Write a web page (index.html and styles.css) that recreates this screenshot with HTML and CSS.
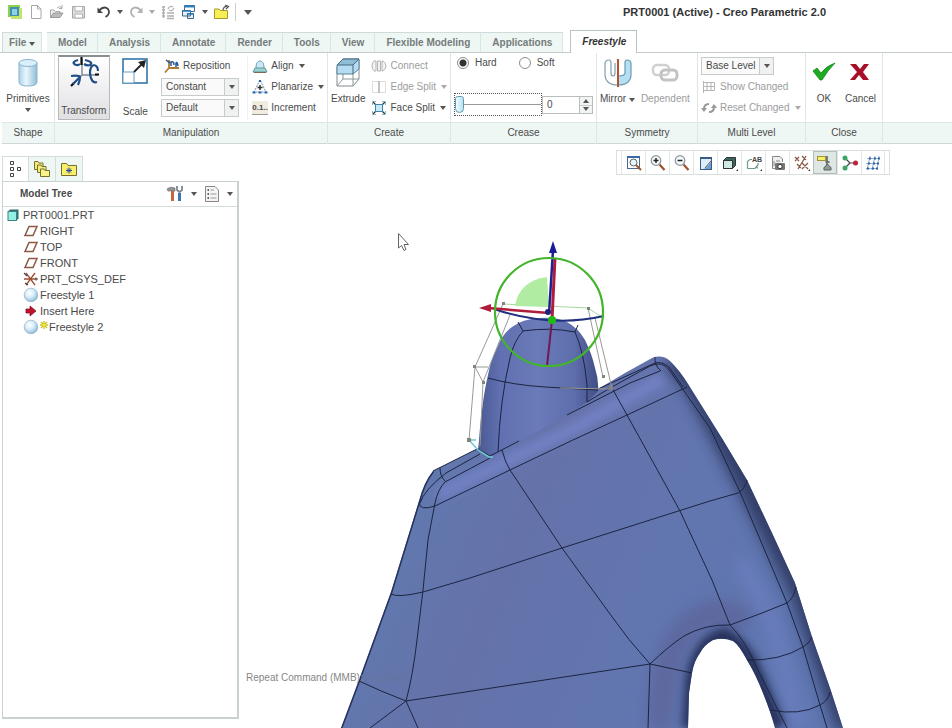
FILE: index.html
```html
<!DOCTYPE html>
<html lang="en">
  <head>
    <meta charset="UTF-8" />
    <meta name="viewport" content="width=device-width, initial-scale=1.0" />
    <title>PRT0001 (Active) - Creo Parametric 2.0</title>
    <link rel="stylesheet" href="styles.css">
  </head>
  <body>
    <!-- shared icons -->
    <svg class="defs" width="0" height="0">
      <defs>
        <linearGradient id="cyl" x1="0" x2="1" y1="0" y2="0">
          <stop offset="0" stop-color="#a9d3e8" />
          <stop offset="0.4" stop-color="#eaf7fd" />
          <stop offset="1" stop-color="#8fbdd6" />
        </linearGradient>
        <radialGradient id="orb" cx="0.4" cy="0.35" r="0.65">
          <stop offset="0" stop-color="#ffffff" />
          <stop offset="0.5" stop-color="#d6edf9" />
          <stop offset="1" stop-color="#8cb9d6" />
        </radialGradient>
        <symbol id="i-plane" viewBox="0 0 16 14">
          <path d="M6 2.500H14L10 11.500H2Z" fill="#fff" stroke="#8a5a44" stroke-width="1.500" />
        </symbol>
        <symbol id="i-sphere" viewBox="0 0 16 16">
          <circle cx="8" cy="8" r="6.800" fill="url(#orb)" stroke="#8fb2c9" stroke-width="0.700" />
        </symbol>
        <symbol id="i-lens" viewBox="0 0 18 18">
          <path d="M10.500 10.500L15.500 16" stroke="#a0522d" stroke-width="2.200" />
          <circle cx="7" cy="6.500" r="4.800" fill="#f4f9fb" stroke="#8a9499" stroke-width="1.200" />
        </symbol>
      </defs>
    </svg>

    <header class="titlebar">
      <div class="quick">
        <button class="qbtn" aria-label="Creo">
          <svg width="16" height="16" viewBox="0 0 16 16"><rect x="1" y="1" width="12" height="12" fill="#8fd04a" /><rect x="4" y="4" width="11" height="11" fill="#c5e36b" /><rect x="3" y="3" width="9" height="9" fill="#3f8fb0" /><path d="M5 5H10V11H5Z" fill="#8bd0e4" /></svg>
        </button>
        <button class="qbtn" aria-label="New">
          <svg width="16" height="16" viewBox="0 0 16 16"><path d="M3.500 1.500H9.500L13 5V14.500H3.500Z M9.500 1.500V5H13" fill="#fff" stroke="#a8a8a8" /></svg>
        </button>
        <button class="qbtn" aria-label="Open">
          <svg width="16" height="16" viewBox="0 0 16 16"><path d="M1.500 13.500V6H5L6.500 7.500H11V9" fill="#eee" stroke="#a8a8a8" /><path d="M1.500 13.500L4.500 9H14L11 13.500Z" fill="#bbb" stroke="#999" /><path d="M8 4Q11 1 13 4M13 1V4.500H10" fill="none" stroke="#aaa" /></svg>
        </button>
        <button class="qbtn save" aria-label="Save">
          <svg width="16" height="16" viewBox="0 0 16 16"><path d="M2.500 2.500H14.500V14H2.500Z" fill="#dcdcdc" stroke="#a5a5a5" /><path d="M5 2.500H12.500V7H5ZM5 10H12.500V14H5Z" fill="#fff" stroke="#b4b4b4" /></svg>
        </button>
        <button class="qbtn" aria-label="Undo">
          <svg width="16" height="16" viewBox="0 0 16 16"><path d="M3 6.500Q8 1.500 12 5Q15 9.500 9.500 13" fill="none" stroke="#444" stroke-width="1.800" /><path d="M1.500 3.500V9H7Z" fill="#444" /></svg>
        </button>
        <span class="caret"></span>
        <button class="qbtn" aria-label="Redo">
          <svg width="16" height="16" viewBox="0 0 16 16"><path d="M13 6.500Q8 1.500 4 5Q1 9.500 6.500 13" fill="none" stroke="#b2b2b2" stroke-width="1.800" /><path d="M14.500 3.500V9H9Z" fill="#b2b2b2" /></svg>
        </button>
        <span class="caret off"></span>
        <button class="qbtn" aria-label="Regenerate">
          <svg width="16" height="16" viewBox="0 0 16 16"><path d="M2 3H5M2 6H5M2 9H5M2 12H5M7 9H14M7 12H14M7 14.500H14M3.500 2V14M8 5Q10 1 13 3M14 4Q12 8 9 6" fill="none" stroke="#b0b0b0" stroke-width="1.300" /></svg>
        </button>
        <button class="qbtn" aria-label="Windows">
          <svg width="16" height="16" viewBox="0 0 16 16"><path d="M3.500 1.500H13.500V7.500H3.500Z" fill="#fff" stroke="#3e6c96" /><path d="M3 2.500H14" stroke="#2d7fb8" stroke-width="2" /><path d="M1.500 6.500H9.500V12H1.500ZM6.500 9.500H12.500V14.500H6.500Z" fill="#e6f2fa" stroke="#41637f" /><path d="M1 7H10M6 10H13" stroke="#2d7fb8" stroke-width="1.600" /></svg>
        </button>
        <span class="caret"></span>
        <button class="qbtn" aria-label="Close window">
          <svg width="17" height="16" viewBox="0 0 17 16"><path d="M1.500 14.500V5H6L7.500 6.500H14.500V14.500Z" fill="#f6ee55" stroke="#a89a28" /><path d="M10 6Q11 2 14 2.500M12 1L15.500 2.500L13 5" fill="none" stroke="#555" stroke-width="1.200" /></svg>
        </button>
        <span class="qsep"></span>
        <button class="qbtn more" aria-label="Customize"><span class="caret wide"></span></button>
      </div>
      <h1 class="title">PRT0001 (Active) - Creo Parametric 2.0</h1>
    </header>

    <nav class="tabs">
      <button class="tab file">File <span class="caret"></span></button>
      <button class="tab">Model</button>
      <button class="tab">Analysis</button>
      <button class="tab">Annotate</button>
      <button class="tab">Render</button>
      <button class="tab">Tools</button>
      <button class="tab">View</button>
      <button class="tab">Flexible Modeling</button>
      <button class="tab">Applications</button>
      <button class="tab active">Freestyle</button>
    </nav>

    <div class="ribbon">
      <section class="group">
        <div class="group-body">
          <button class="big">
            <svg width="24" height="32" viewBox="0 0 24 32"><path d="M3 6V25Q3 29 12 29Q21 29 21 25V6Z" fill="url(#cyl)" stroke="#86b4cd" /><ellipse cx="12" cy="6" rx="9" ry="3.500" fill="#d9f0fa" stroke="#86b4cd" /></svg>
            <span>Primitives</span>
            <span class="caret"></span>
          </button>
        </div>
        <h2>Shape</h2>
      </section>

      <section class="group">
        <div class="group-body manip">
          <button class="big pressed">
            <svg width="32" height="32" viewBox="0 0 32 32"><path d="M14 2V18M14 18L30 18M14 18L4 28" stroke="#7c8894" stroke-width="1.400" fill="none" /><path d="M13.500 0V8M27 17.500H31M3 29L6 26" stroke="#111" stroke-width="2.200" /><path d="M10 3Q3 5 7 7.500Q10 9 12 7M17 3Q26 5 22 8Q19 9 16 7M26 8Q22 9 22 16Q23 27 29 25M26 8Q30 9 30 14M3 19Q11 18 12 20Q12 24 10 28M12 20L5 27" fill="none" stroke="#1f4e86" stroke-width="2.200" /></svg>
            <span>Transform</span>
          </button>
          <button class="big low">
            <svg width="28" height="28" viewBox="0 0 28 28"><rect x="2" y="2" width="24" height="24" fill="#fff" stroke="#3275a8" stroke-width="1.600" /><rect x="2" y="15" width="11" height="11" fill="#fff" stroke="#6c9ec0" /><path d="M13 15L22 6" stroke="#222" stroke-width="1.800" /><path d="M25 3L23 11L17 5Z" fill="#222" /></svg>
            <span>Scale</span>
          </button>
          <div class="rows repos">
            <button class="small">
              <svg width="16" height="16" viewBox="0 0 16 16"><path d="M5 2V10H15M5 10L1 14.500" stroke="#b07a2e" stroke-width="1.800" fill="none" /><path d="M2 2L6 5M7 8V4Q10 3 10 7M12 9V5Q13 3 14 8" stroke="#24569a" stroke-width="1.500" fill="none" /></svg>
              Reposition
            </button>
            <div class="select wide">
              <select aria-label="Drag mode"><option>Constant</option></select>
              <span class="drop"><span class="caret"></span></span>
            </div>
            <div class="select wide">
              <select aria-label="Orientation"><option>Default</option></select>
              <span class="drop"><span class="caret"></span></span>
            </div>
          </div>
          <div class="rows align">
            <button class="small">
              <svg width="16" height="16" viewBox="0 0 16 16"><path d="M4 10Q4 3 8 3Q12 3 12 10" fill="#cfe7f2" stroke="#6aa5bf" /><path d="M1 14L3 10H13L15 14Z" fill="#9fd0cc" stroke="#5b9aa0" /><path d="M2 14.500H14" stroke="#7a6a50" /></svg>
              Align <span class="caret"></span>
            </button>
            <button class="small">
              <svg width="16" height="16" viewBox="0 0 16 16"><path d="M8 1L2 13H14Z" fill="none" stroke="#6e8fab" stroke-dasharray="2 1" /><path d="M0.500 13.500H3.500M6.500 13.500H9.500M12.500 13.500H15.500M8 1V3" stroke="#2467ad" stroke-width="2.200" /><path d="M8 6V11M5.500 8.500H10.500" stroke="#333" stroke-width="1.500" /></svg>
              Planarize <span class="caret"></span>
            </button>
            <button class="small">
              <span class="inc-icon">0.1..</span>
              Increment
            </button>
          </div>
        </div>
        <h2>Manipulation</h2>
      </section>

      <section class="group">
        <div class="group-body create">
          <button class="big">
            <svg width="28" height="32" viewBox="0 0 28 32"><path d="M3 10V29H19L25 22V3" fill="#fff" stroke="#7e8a90" /><path d="M19 29V14M3 29L9 22H25M9 22V14" fill="none" stroke="#8d979c" /><path d="M3 8L9 2H25V12L19 17H3Z" fill="#b5dcf0" stroke="#5b8298" /><path d="M3 8L9 2H25L19 8Z" fill="#8fbdd6" stroke="#45697e" /><path d="M19 8V17" fill="none" stroke="#45697e" /></svg>
            <span>Extrude</span>
          </button>
          <div class="rows">
            <button class="small" disabled>
              <svg width="16" height="16" viewBox="0 0 16 16"><path d="M5 3H3Q1 5 1 8T3 13H5ZM11 3H12Q15 5 15 8T12 13H11ZM6.500 3H9.500V13H6.500Z" fill="#f2f2f2" stroke="#b5b5b5" /></svg>
              Connect
            </button>
            <button class="small" disabled>
              <svg width="16" height="16" viewBox="0 0 16 16"><path d="M1.500 2.500H14.500V13.500H1.500Z" fill="none" stroke="#ddd" /><path d="M8 2V14" stroke="#aaa" stroke-width="1.400" /></svg>
              Edge Split <span class="caret off"></span>
            </button>
            <button class="small">
              <svg width="16" height="16" viewBox="0 0 16 16"><path d="M2 2L5 5M14 2L11 5M2 14L5 11M14 14L11 11" stroke="#333" stroke-width="1.300" /><rect x="4.500" y="4.500" width="7" height="7" fill="#c9e8f4" stroke="#3b86ac" /><path d="M1.500 5V1.500H5M11 1.500H14.500V5M14.500 11V14.500H11M5 14.500H1.500V11" fill="none" stroke="#8bb6c9" /></svg>
              Face Split <span class="caret"></span>
            </button>
          </div>
        </div>
        <h2>Create</h2>
      </section>

      <section class="group">
        <div class="group-body crease">
          <div class="radios">
            <label><input type="radio" name="crease" checked /> Hard</label>
            <label><input type="radio" name="crease" /> Soft</label>
          </div>
          <div class="crease-value">
            <div class="slider"><input type="range" min="0" max="100" value="0" aria-label="Crease" /></div>
            <div class="spin">
              <input type="text" value="0" aria-label="Crease value" />
              <div class="spin-btns">
                <button aria-label="Increase"><span class="caret up"></span></button>
                <button aria-label="Decrease"><span class="caret"></span></button>
              </div>
            </div>
          </div>
        </div>
        <h2>Crease</h2>
      </section>

      <section class="group">
        <div class="group-body pair">
          <button class="big">
            <svg width="30" height="32" viewBox="0 0 30 32"><path d="M16 28Q3 28 3 17V7Q3 3 7 3Q9 3 9 6V16Q9 19 11 19Q13 19 13 16V6" fill="#fff" stroke="#7e9eb0" stroke-width="1.200" /><path d="M16 28Q29 28 29 17V7Q29 3 25 3Q23 3 23 6V16Q23 19 16 19Z" fill="#b5dff2" stroke="#6a9ab2" stroke-width="1.200" /><path d="M16 2V30" stroke="#b4532f" stroke-width="2" /></svg>
            <span>Mirror <span class="caret"></span></span>
          </button>
          <button class="big" disabled>
            <svg width="30" height="32" viewBox="0 0 30 32"><rect x="3" y="8" width="16" height="10" rx="4" fill="none" stroke="#d0d0d0" stroke-width="2.500" /><rect x="11" y="13" width="16" height="10" rx="4" fill="none" stroke="#c3c3c3" stroke-width="3" /></svg>
            <span>Dependent</span>
          </button>
        </div>
        <h2>Symmetry</h2>
      </section>

      <section class="group">
        <div class="group-body">
          <div class="rows">
            <div class="select level">
              <select aria-label="Level"><option>Base Level</option></select>
              <span class="drop"><span class="caret"></span></span>
            </div>
            <button class="small" disabled>
              <svg width="16" height="16" viewBox="0 0 16 16"><path d="M2.500 2V14M2.500 3.500H13.500V11.500H2.500M6 3.500V11.500M10 3.500V11.500M2.500 7.500H13.500" fill="none" stroke="#b5b5b5" /></svg>
              Show Changed
            </button>
            <button class="small" disabled>
              <svg width="16" height="16" viewBox="0 0 16 16"><path d="M3 9Q3 4 8 4M13 7Q13 12 8 12" fill="none" stroke="#999" stroke-width="2" /><path d="M0 8H6L3 12ZM10 8H16L13 4Z" fill="#999" /></svg>
              Reset Changed <span class="caret off"></span>
            </button>
          </div>
        </div>
        <h2>Multi Level</h2>
      </section>

      <section class="group">
        <div class="group-body pair close">
          <button class="big">
            <svg width="24" height="32" viewBox="0 0 24 32"><path d="M1 14L5 11L9 16Q14 9 23 6Q16 13 10 23H8Z" fill="#1faa24" stroke="#178a1b" stroke-width="0.800" /></svg>
            <span>OK</span>
          </button>
          <button class="big">
            <svg width="24" height="32" viewBox="0 0 24 32"><path d="M2 7H8L12 12L16 7H21L15 15L21 23H15L11 18L7 23H2L9 15Z" fill="#a8102a" /></svg>
            <span>Cancel</span>
          </button>
        </div>
        <h2>Close</h2>
      </section>

      <section class="group filler">
        <div class="group-body"></div>
        <h2></h2>
      </section>
    </div>

    <main class="work">
      <aside class="side">
        <div class="side-tabs">
          <button class="side-tab active" aria-label="Model tree">
            <svg width="16" height="18" viewBox="0 0 16 18"><path d="M2.500 1.500H5.500V4.500H2.500ZM2.500 7.500H5.500V10.500H2.500ZM2.500 13.500H5.500V16.500H2.500ZM9.500 7.500H12.500V10.500H9.500Z" fill="#fff" stroke="#444" /></svg>
          </button>
          <button class="side-tab" aria-label="Folders">
            <svg width="18" height="18" viewBox="0 0 18 18"><path d="M1.500 9.500V1.500H5L6 3H10V9.500Z" fill="#f5ec7a" stroke="#77702c" /><path d="M4.500 12.500V5H8L9 6.500H13V12.500Z" fill="#f5ec7a" stroke="#77702c" /><path d="M7.500 16.500V9H11L12 10.500H16.500V16.500Z" fill="#faf28a" stroke="#77702c" /></svg>
          </button>
          <button class="side-tab" aria-label="Favorites">
            <svg width="18" height="16" viewBox="0 0 18 16"><path d="M1.500 14.500V2.500H6.500L8 4.500H16.500V14.500Z" fill="#f9ef6a" stroke="#77702c" /><path d="M9 6.500V12.500M6 9.500H12M7 7.500L11 11.500M11 7.500L7 11.500" stroke="#2b4b9b" /></svg>
          </button>
        </div>
        <div class="panel">
          <div class="panel-head">
            <h2>Model Tree</h2>
            <button class="qbtn" aria-label="Settings">
              <svg width="18" height="18" viewBox="0 0 18 18"><path d="M1 4Q4 1 9 3V6H2Z" fill="#8f9699" stroke="#666" stroke-width="0.600" /><path d="M6.500 6V16" stroke="#c5683b" stroke-width="3" /><path d="M13.500 8V16" stroke="#3a76b4" stroke-width="3" /><path d="M11 1V5L13.500 7L16 5V1" fill="none" stroke="#7d878c" stroke-width="1.800" /></svg>
            </button>
            <span class="caret"></span>
            <button class="qbtn list" aria-label="Show">
              <svg width="16" height="18" viewBox="0 0 16 18"><path d="M1.500 1.500H11L14.500 5V16.500H1.500Z" fill="#f4f4f4" stroke="#888" /><path d="M3.500 5H5M3.500 9H5M3.500 13H5" stroke="#333" stroke-width="1.500" /><path d="M6.500 5H10M6.500 9H12.500M6.500 13H12.500" stroke="#999" /></svg>
            </button>
            <span class="caret"></span>
          </div>
          <ul class="tree">
            <li class="root"><svg width="16" height="14" viewBox="0 0 16 14"><path d="M2 3.500L4 1.500H12.500V10.500L10.500 12.500H2Z" fill="#2f6e6c" /><rect x="2" y="3.500" width="8.500" height="9" fill="#93f0e2" stroke="#3c8583" /></svg>PRT0001.PRT</li>
            <li><svg width="16" height="14"><use href="#i-plane" /></svg>RIGHT</li>
            <li><svg width="16" height="14"><use href="#i-plane" /></svg>TOP</li>
            <li><svg width="16" height="14"><use href="#i-plane" /></svg>FRONT</li>
            <li><svg width="16" height="16" viewBox="0 0 16 16"><path d="M3 2L12 14M12 2L3 14M1 8H12" stroke="#9c4f35" stroke-width="1.300" /><path d="M1 2L4 5M12 8H15M13 6.500V9.500M2 12L5 14" stroke="#444" stroke-width="1.200" /></svg>PRT_CSYS_DEF</li>
            <li><svg width="16" height="16"><use href="#i-sphere" /></svg>Freestyle 1</li>
            <li><svg width="16" height="14" viewBox="0 0 16 14"><path d="M3 5H7V2L13 7L7 12V9H3Z" fill="#c3122b" stroke="#6f0f1c" stroke-width="0.700" /></svg>Insert Here</li>
            <li><svg width="16" height="16"><use href="#i-sphere" /></svg><svg width="8" height="12" viewBox="0 0 8 12"><path d="M4 0V8M0 4H8M1 1L7 7M7 1L1 7" stroke="#c9c32a" stroke-width="1.300" /><circle cx="4" cy="4" r="1.500" fill="#f5ef3a" /></svg>Freestyle 2</li>
          </ul>
        </div>
      </aside>

      <section class="viewport">
        <svg class="scene" viewBox="240 144 712 584" preserveAspectRatio="xMinYMin slice">
          <defs>
            <linearGradient id="bodyFill" x1="0" y1="0" x2="1" y2="0.300">
              <stop offset="0" stop-color="#6775b4" />
              <stop offset="0.220" stop-color="#6079ae" />
              <stop offset="0.450" stop-color="#6572aa" />
              <stop offset="0.700" stop-color="#6275ae" />
              <stop offset="1" stop-color="#5f76b0" />
            </linearGradient>
            <linearGradient id="bumpFill" x1="0" x2="1" y1="0" y2="0">
              <stop offset="0" stop-color="#4a5993" />
              <stop offset="0.180" stop-color="#6070b0" />
              <stop offset="0.500" stop-color="#6b7ab8" />
              <stop offset="0.800" stop-color="#5e6dac" />
              <stop offset="1" stop-color="#414f86" />
            </linearGradient>
            <path id="bodyShape" d="M341 728L359 680L391 592L419 501Q424 482 433 471L477 449L598 389L625 373L652 358Q662 354 670 361Q680 371 688 384L723 440L747 480L772 533L795 583L812 637L830 688L843 728H775Q771 713 763 693Q756 675 747 660Q739 645 733 641Q723 637 713 640Q704 645 700 653Q694 661 692 673L689 693L688 728Z" />
            <clipPath id="bodyClip"><use href="#bodyShape" /></clipPath>
            <filter id="soft" x="-30%" y="-30%" width="160%" height="160%"><feGaussianBlur stdDeviation="7" /></filter>
            <filter id="softer" x="-30%" y="-30%" width="160%" height="160%"><feGaussianBlur stdDeviation="4" /></filter>
          </defs>

          <!-- body -->
          <use href="#bodyShape" fill="url(#bodyFill)" />
          <g clip-path="url(#bodyClip)" fill="none">
            <path d="M438 495L573 429L664 378" stroke="#7281c4" stroke-width="12" filter="url(#softer)" />
            <path d="M676 356L698 385L748 480L803 590L850 728" stroke="#303c68" stroke-width="28" filter="url(#soft)" />
            <path d="M740 560L772 622L800 728" stroke="#6b7dbe" stroke-width="14" filter="url(#soft)" />
            <path d="M660 728Q660 655 690 625Q720 600 745 625" stroke="#5d689f" stroke-width="26" filter="url(#soft)" />
            <path d="M690 728L693 680Q700 642 724 636Q738 642 750 662L778 728" stroke="#28335c" stroke-width="16" filter="url(#softer)" />
            <path d="M341 728L359 680L391 592L419 501Q424 482 433 471" stroke="#28325c" stroke-width="3" />
          </g>

          <!-- bump -->
          <path d="M478 450L479 440Q482 400 488 375Q491 359 497 348Q502 334 512 327Q522 319 540 318Q556 317 567 322Q578 328 585 340Q592 354 595 368Q599 380 598 391L587 402L567 415L520 441L491 456Z" fill="url(#bumpFill)" />

          <g fill="none" stroke="#1c2442" stroke-width="1">
            <path d="M440 468Q440 476 445 481M420 503Q424 490 446 473L480 454M406 701Q413 675 417 640L423 590L428 540L435 503Q438 489 445 482L490 458" />
            <path d="M419 503Q420 511 435 506L510 470L573 440L627 415L687 387" />
            <path d="M478 449L490 456L519 441M567 415L630 383L660 371" />
            <path d="M587 402L610 388L650 366Q663 360 670 371L710 428L740 492L787 603L803 647L820 705L827 728" />
            <path d="M598 389L655 363Q662 361 669 367L683 387" />
            <path d="M655 357Q654 365 661 371M433 471L477 449" />
            <path d="M502 450Q505 462 510 470L562 548L610 614Q628 640 650 664M612 388L627 415L680 511L712 580L730 625" />
            <path d="M391 594Q398 598 423 592L470 578L562 548L650 520L710 501L738 493Q745 489 747 480" />
            <path d="M359 681Q380 691 406 701L650 664M406 701L370 728M406 701L418 728M650 664L648 728M650 664L692 673" />
            <path d="M650 664Q670 645 684 636Q705 624 730 625L762 613L787 603Q794 598 796 587M730 625Q745 640 757 668L787 728M747 660Q780 661 803 647Q810 643 812 637M770 710Q800 716 820 705Q828 701 830 692" />
            <path d="M498 452Q500 400 510 358Q514 341 523 331Q550 327 575 332Q584 352 587 385L587 402M518 322L523 331M578 325L575 332M488 378Q513 385 545 387L598 390" />
          </g>

          <!-- control mesh -->
          <g fill="none" stroke="#9a9a94" stroke-width="1">
            <path d="M503 304L475 367L469 440M475 367L483 382L480 446M510 315L483 382M475 367H488M588 308L603 377M595 318L612 388M560 388L612 389" />
            <path d="M503 304L588 308M588 308L603 318" stroke="#a5d79b" />
            <path d="M469 440L478 450L489 457H493M469 440H476" stroke="#6fc6cf" stroke-width="1.500" />
          </g>
          <g fill="#84847e">
            <rect x="502" y="302" width="3" height="3" /><rect x="587" y="307" width="3" height="3" />
            <rect x="473" y="365" width="3" height="3" /><rect x="482" y="381" width="3" height="3" />
            <rect x="602" y="375" width="3" height="3" /><rect x="609" y="386" width="4" height="4" />
            <rect x="467" y="438" width="4" height="4" />
          </g>

          <!-- transform dragger -->
          <path d="M515 306Q519 281 547 277L549 307Z" fill="#b0eda3" />
          <path d="M494 309Q550 328 604 316" fill="none" stroke="#20307e" stroke-width="2" />
          <path d="M555 258L552 320" stroke="#b01c3c" stroke-width="3" />
          <path d="M553 250L549 314" stroke="#1c2391" stroke-width="2.500" />
          <path d="M553 241L549 253H557Z" fill="#1c1c96" />
          <path d="M549 313L488 308" stroke="#b01c3c" stroke-width="2.500" />
          <path d="M479 308L491 304V312Z" fill="#b01c3c" />
          <path d="M552 320L547 366" stroke="#701850" stroke-width="2" />
          <circle cx="549" cy="312" r="54" fill="none" stroke="#42b52a" stroke-width="2.200" />
          <circle cx="548" cy="312" r="3" fill="#16267c" />
          <circle cx="552" cy="320" r="4" fill="#22b914" />

          <path d="M398.500 233.500V248L401.500 245.500L404 250.500L406 249.500L404 244.500H408.500Z" fill="#fff" stroke="#666" />
        </svg>

        <div class="view-tools">
          <button aria-label="Refit"><svg width="18" height="18" viewBox="0 0 18 18"><rect x="2.500" y="2.500" width="12" height="12" fill="#fff" stroke="#4c6891" /><path d="M2 3H15" stroke="#3a68a8" stroke-width="2" /><path d="M11 11L16 16" stroke="#a0522d" stroke-width="2" /><circle cx="8.500" cy="8.500" r="3.500" fill="#e9f4f8" stroke="#59666e" /></svg></button>
          <button aria-label="Zoom in"><svg width="18" height="18" viewBox="0 0 18 18"><use href="#i-lens" width="18" height="18" /><path d="M7 4V9M4.500 6.500H9.500" stroke="#222" stroke-width="1.500" /></svg></button>
          <button aria-label="Zoom out"><svg width="18" height="18" viewBox="0 0 18 18"><use href="#i-lens" width="18" height="18" /><path d="M4.500 6.500H9.500" stroke="#222" stroke-width="1.500" /></svg></button>
          <button aria-label="Repaint"><svg width="18" height="18" viewBox="0 0 18 18"><rect x="3.500" y="3.500" width="11" height="12" fill="#dceefa" stroke="#3a5987" /><path d="M3 4H15" stroke="#3a5987" stroke-width="2" /><path d="M14 8L9 14L6 15H14Z" fill="#6d9fd0" /><path d="M14 7L8 14" stroke="#555" /></svg></button>
          <button aria-label="Display style"><svg width="18" height="18" viewBox="0 0 18 18"><path d="M2.500 6.500L5.500 3.500H14.500V11.500L11.500 14.500H2.500Z" fill="#3b6660" stroke="#333" /><path d="M2.500 6.500H11.500V14.500H2.500Z" fill="#cfe9e2" stroke="#333" /><path d="M17 15V17H15Z" fill="#333" /></svg></button>
          <button aria-label="Saved orientations"><svg width="18" height="18" viewBox="0 0 18 18"><path d="M2.500 14.500V7.500L5 5.500H7M2.500 14.500H10L13 11V9M11 12L13 14.500" fill="none" stroke="#6d9c86" stroke-width="1.200" /><text x="7" y="8" font-size="7" class="ab">AB</text><path d="M17 15V17H15Z" fill="#333" /></svg></button>
          <button aria-label="View manager"><svg width="18" height="18" viewBox="0 0 18 18"><path d="M3.500 14.500V2.500H11L13.500 5V8M3.500 14.500H6" fill="#eee" stroke="#888" /><rect x="6" y="9" width="10" height="7" rx="1" fill="#777" /><circle cx="11" cy="12.500" r="2.200" fill="#fff" stroke="#333" /><path d="M5 12V7M7 7H11" stroke="#888" /></svg></button>
          <button aria-label="Datum display"><svg width="18" height="18" viewBox="0 0 18 18"><path d="M2 3L6 7M6 3L2 7M9 2L13 6M13 2L5 15M9 9L15 15M15 9L9 15M4 10L8 14" stroke="#8c5a44" stroke-width="1.300" /><path d="M17 15V17H15Z" fill="#333" /></svg></button>
          <button class="on" aria-label="Annotation display"><svg width="18" height="18" viewBox="0 0 18 18"><rect x="1.500" y="2.500" width="8" height="4" fill="#f7ee6a" stroke="#a09433" /><path d="M11 2V8M9.500 8H13.500" stroke="#555" stroke-width="1.500" /><path d="M8 16Q7 13 10 12L11 9L13 12Q16 13 15 16Z" fill="#8f9a97" stroke="#5a625f" /></svg></button>
          <button aria-label="Spin center"><svg width="18" height="18" viewBox="0 0 18 18"><path d="M4 4L9 9L4 14M9 9H14" fill="none" stroke="#444" stroke-width="1.200" /><circle cx="4" cy="4" r="2.500" fill="#3aa564" /><circle cx="4" cy="14" r="2.500" fill="#3aa564" /><circle cx="14.500" cy="9" r="2.500" fill="#c22038" /></svg></button>
          <button aria-label="Control mesh"><svg width="18" height="18" viewBox="0 0 18 18"><path d="M6 2L3 16M11 2L8 16M15 2L13 16M3 4.500H16M2 9.500H15M2 14.500H14" fill="none" stroke="#8db0d6" /><path d="M5 4.500H7M10 4.500H12M14 4.500H16M4 9.500H6M9 9.500H11M13 9.500H15M3 14.500H5M8 14.500H10M12 14.500H14" stroke="#2f62a3" stroke-width="2" /></svg></button>
        </div>

        <p class="prompt">Repeat Command (MMB): <span>Freestyle</span></p>
      </section>
    </main>
  </body>
</html>
```

FILE: styles.css
```css
* {
  box-sizing: border-box;
}

body {
  font-family: "Liberation Sans", Arial, sans-serif;
  font-size: 10px;
  line-height: 12px;
  color: #4a4a4a;
  margin: 0;
  min-height: 100vh;
  background-color: #fff;
  display: flex;
  flex-direction: column;
}

button,
input,
select {
  font: inherit;
  color: inherit;
}

button {
  background: none;
  border: none;
  padding: 0;
  cursor: pointer;
}

button:disabled {
  color: #9c9c9c;
  cursor: default;
}

h1,
h2,
p,
ul {
  margin: 0;
  padding: 0;
}

svg {
  display: block;
  flex: none;
}

.defs {
  position: absolute;
}

.caret {
  display: inline-block;
  flex: none;
  width: 0;
  height: 0;
  border: 3px solid transparent;
  border-top: 4px solid #555;
  border-bottom: none;
}

.caret.off {
  border-top-color: #aaa;
}

.caret.up {
  border-top: none;
  border-bottom: 4px solid #555;
}

.caret.wide {
  border-width: 5px 4px 0;
}

/* title bar */
.titlebar {
  display: flex;
  align-items: center;
  justify-content: space-between;
  height: 30px;
  padding: 0 126px 6px 7px;
}

.quick {
  display: flex;
  align-items: center;
  gap: 5px;
}

.qbtn.save {
  margin-right: 5px;
}

.qsep {
  width: 1px;
  height: 18px;
  background-color: #ccc;
}

.qbtn.more {
  display: flex;
  margin-left: 3px;
}

.title {
  font-size: 11px;
  font-weight: bold;
  color: #333;
  white-space: nowrap;
}

/* ribbon tabs */
.tabs {
  display: flex;
  align-items: flex-end;
  height: 23px;
  padding-left: 2px;
  border-bottom: 1px solid #c4cccb;
}

.tab {
  height: 20px;
  padding: 0 10px 0 11px;
  font-weight: bold;
  color: #757b7b;
  background-color: #eef7f4;
  border-top: 1px solid #cfdbd8;
  border-right: 1px solid #dbe6e3;
  white-space: nowrap;
}

.tab.file {
  padding: 0 6px;
  margin-right: 5px;
  border-left: 1px solid #cfdbd8;
}

.tab.active {
  height: 23px;
  margin: 0 0 -1px 7px;
  font-style: italic;
  color: #333;
  background-color: #fff;
  border: 1px solid #b9c3c1;
  border-bottom: none;
}

/* ribbon */
.ribbon {
  display: grid;
  grid-template-columns: 53px 273px 123px 146px 101px 108px 77px 1fr;
  padding-left: 2px;
}

.group {
  display: flex;
  flex-direction: column;
  border-right: 1px solid #dde6e4;
}

.group.filler {
  border-right: none;
}

.group h2 {
  height: 22px;
  font-size: 10px;
  font-weight: normal;
  line-height: 20px;
  text-align: center;
  background-color: #eef7f4;
  border-top: 1px solid #dde8e5;
  border-bottom: 1px solid #cdd8d6;
}

.group-body {
  display: flex;
  height: 69px;
  padding: 2px 3px;
}

.big {
  display: flex;
  flex-direction: column;
  align-items: center;
  gap: 4px;
  height: 65px;
  padding-top: 2px;
  white-space: nowrap;
}

.group:first-child .big {
  width: 100%;
}

.group:first-child .big .caret {
  margin-top: -1px;
}

.big.pressed,
.big.low {
  width: 52px;
  justify-content: space-between;
  padding-bottom: 2px;
}

.big.pressed {
  background: linear-gradient(#fff, #e0e0e4);
  border: 1px solid #b5b9ba;
  border-top: 2px solid #8a9090;
  padding: 0 0 2px;
}

.rows {
  display: grid;
  grid-template-rows: repeat(3, 21px);
  align-items: center;
  justify-items: start;
}

.small {
  display: flex;
  align-items: center;
  gap: 3px;
  white-space: nowrap;
}

.small .caret {
  margin-left: 2px;
}

.repos {
  width: 79px;
  margin-right: 8px;
}

.repos .small {
  margin-left: 3px;
}

.align {
  padding-left: 4px;
  border-left: 1px solid #eef1f1;
}

.inc-icon {
  width: 16px;
  font-size: 8px;
  font-weight: bold;
  line-height: 13px;
  text-align: left;
  background-color: #f1ecdf;
  border-bottom: 1px solid #999;
}

.select {
  display: grid;
  grid-template-columns: 1fr 14px;
  height: 18px;
  background-color: #fafafa;
  border: 1px solid #c5cccb;
}

.select.wide {
  width: 78px;
}

.select.level {
  width: 73px;
}

.select select {
  grid-area: 1 / 1 / 2 / 3;
  appearance: none;
  padding: 0 4px;
  border: none;
  background: none;
}

.drop {
  grid-area: 1 / 2;
  display: grid;
  place-items: center;
  border-left: 1px solid #c5cccb;
  background-color: #f0f2f2;
  pointer-events: none;
}

.create {
  gap: 6px;
}

.crease {
  flex-direction: column;
  justify-content: space-between;
  padding-bottom: 6px;
}

.radios {
  display: flex;
  gap: 22px;
  padding-left: 3px;
}

.radios label {
  display: flex;
  align-items: center;
  gap: 6px;
  height: 16px;
}

.radios input {
  appearance: none;
  width: 12px;
  height: 12px;
  margin: 0;
  border: 1px solid #8b8b8b;
  border-radius: 50%;
  background-color: #fff;
}

.radios input:checked {
  background: radial-gradient(#333 0 3px, #fff 4px);
}

.crease-value {
  display: flex;
  align-items: center;
}

.slider {
  flex: 1;
  height: 23px;
  border: 1px dotted #555;
  display: flex;
  align-items: center;
}

.slider input {
  appearance: none;
  width: 100%;
  height: 18px;
  margin: 0;
  background: linear-gradient(#999, #999) center / 100% 1px no-repeat;
}

.slider input::-webkit-slider-thumb {
  appearance: none;
  width: 9px;
  height: 17px;
  border: 1px solid #5c9db5;
  border-radius: 3px 3px 5px 5px;
  background: linear-gradient(90deg, #f5fcff, #b9e2ef);
}

.spin {
  display: flex;
  width: 51px;
  height: 18px;
  border: 1px solid #b8bebd;
}

.spin input {
  width: 36px;
  border: none;
  padding: 0 4px;
}

.spin-btns {
  flex: 1;
  display: grid;
  grid-template-rows: 1fr 1fr;
  border-left: 1px solid #b8bebd;
}

.spin-btns button {
  display: grid;
  place-items: center;
  background-color: #f2f3f3;
}

.spin-btns button + button {
  border-top: 1px solid #c5cccb;
}

.pair {
  gap: 6px;
}

.pair.close {
  justify-content: center;
  gap: 9px;
}

/* work area */
.work {
  flex: 1;
  display: flex;
}

.side {
  width: 240px;
  flex: none;
  display: flex;
  flex-direction: column;
  padding: 12px 1px 9px 2px;
}

.side-tabs {
  display: flex;
}

.side-tab {
  display: grid;
  place-items: center;
  width: 27px;
  height: 25px;
  background-color: #eef7f4;
  border: 1px solid #d3dedb;
  border-left: none;
  border-bottom: none;
}

.side-tab.active {
  background-color: #fff;
  border-left: 1px solid #d3dedb;
}

.panel {
  flex: 1;
  border: 1px solid #c9d2d0;
  border-right-width: 2px;
  border-bottom-width: 2px;
}

.panel-head {
  display: flex;
  align-items: center;
  gap: 7px;
  height: 25px;
  padding: 0 4px 0 17px;
  border-bottom: 1px solid #d5dddb;
}

.panel-head h2 {
  flex: 1;
  font-size: 10px;
  font-weight: bold;
}

.tree {
  list-style: none;
  font-size: 11px;
}

.tree li {
  display: flex;
  align-items: center;
  gap: 1px;
  height: 16px;
  padding-left: 20px;
}

.tree .root {
  padding-left: 3px;
}

.viewport {
  flex: 1;
  position: relative;
  min-height: 584px;
  overflow: hidden;
}

.scene {
  position: absolute;
  inset: 0;
  width: 100%;
  height: 100%;
}

.view-tools {
  position: absolute;
  top: 6px;
  right: 62px;
  display: flex;
  padding: 0 4px;
  background-color: #fff;
  border: 1px solid #d9e0de;
}

.view-tools button {
  display: grid;
  place-items: center;
  width: 24px;
  height: 23px;
  border-left: 1px solid #e2e7e6;
}

.view-tools button:last-child {
  border-right: 1px solid #e2e7e6;
}

.view-tools .on {
  background-color: #dfe7e5;
  border: 1px solid #b3bdba;
}

.ab {
  font-weight: bold;
  fill: #444;
}

.prompt {
  position: absolute;
  left: 6px;
  bottom: 44px;
  color: #868686;
}

.prompt span {
  color: #66749f;
}
```
